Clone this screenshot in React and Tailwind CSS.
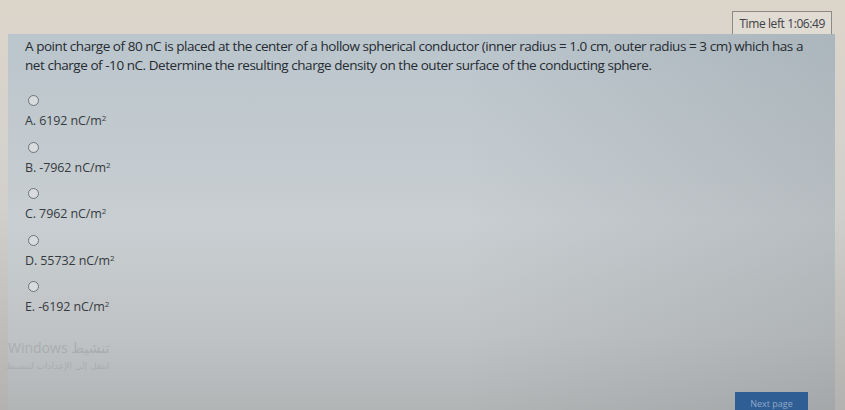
export default function App() {
  const options = [
    { label: 'A. 6192 nC/m' },
    { label: 'B. -7962 nC/m' },
    { label: 'C. 7962 nC/m' },
    { label: 'D. 55732 nC/m' },
    { label: 'E. -6192 nC/m' },
  ]

  return (
    <div
      className="w-[845px] h-[410px] overflow-hidden flex flex-col bg-gradient-to-b from-[#dcd5ca] via-[#d2d0cc] to-[#b3b2b0]"
      style={{ fontFamily: '"Open Sans", "DejaVu Sans", sans-serif' }}
    >
      <div className="h-[34px] shrink-0 flex justify-end items-start pt-[11px] pr-[13px]">
        <div className="border border-[#8d8a85] bg-[#e0dbd3] px-[6px] h-[25px] flex items-center text-[12px] text-[#3f4145] tracking-[-0.4px]">
          Time left 1:06:49
        </div>
      </div>

      <div className="flex-1 ml-[8px] mr-[10px] flex flex-col bg-[linear-gradient(to_right,transparent_55%,rgba(60,70,75,0.12)),linear-gradient(to_bottom,#bac5cc,#c8ced1_50%,#c0c3c5_80%,#b2b5b6)]">
        <div className="pl-[17px] pr-[4px] pt-[3px] text-[13.5px] leading-[19px] text-[#262b31] tracking-[-0.45px] whitespace-nowrap">
          <div>A point charge of 80 nC is placed at the center of a hollow spherical conductor (inner radius = 1.0 cm, outer radius = 3 cm) which has a</div>
          <div>net charge of -10 nC. Determine the resulting charge density on the outer surface of the conducting sphere.</div>
        </div>

        <div className="pl-[17px] pt-[20px] flex flex-col gap-[12.5px]">
          {options.map(o => (
            <div key={o.label} className="flex flex-col gap-[7px]">
              <span className="ml-[3px] w-[11px] h-[11px] rounded-full border-[1.5px] border-[#6d7378] bg-[#d9dcde]" />
              <span className="text-[12.5px] leading-[16px] text-[#363b41] tracking-[-0.1px]">
                {o.label}<sup className="text-[8px]">2</sup>
              </span>
            </div>
          ))}
        </div>

        <div className="mt-[26px] text-[#a9adaf] leading-none w-fit">
          <div className="text-[14px]">
            Windows <span style={{ fontFamily: '"DejaVu Sans", sans-serif' }}>تنشيط</span>
          </div>
          <div className="text-[9px] mt-[7px] -ml-[8px]" style={{ fontFamily: '"DejaVu Sans", sans-serif' }} dir="rtl">
            انتقل إلى الإعدادات لتنشيط
          </div>
        </div>

        <div className="flex-1" />
        <div className="flex justify-end pr-[27px]">
          <div className="w-[73px] h-[18px] bg-[#2f5e94] text-[#8fa9c7] text-[9px] flex items-end justify-center">
            Next page
          </div>
        </div>
      </div>
    </div>
  )
}
